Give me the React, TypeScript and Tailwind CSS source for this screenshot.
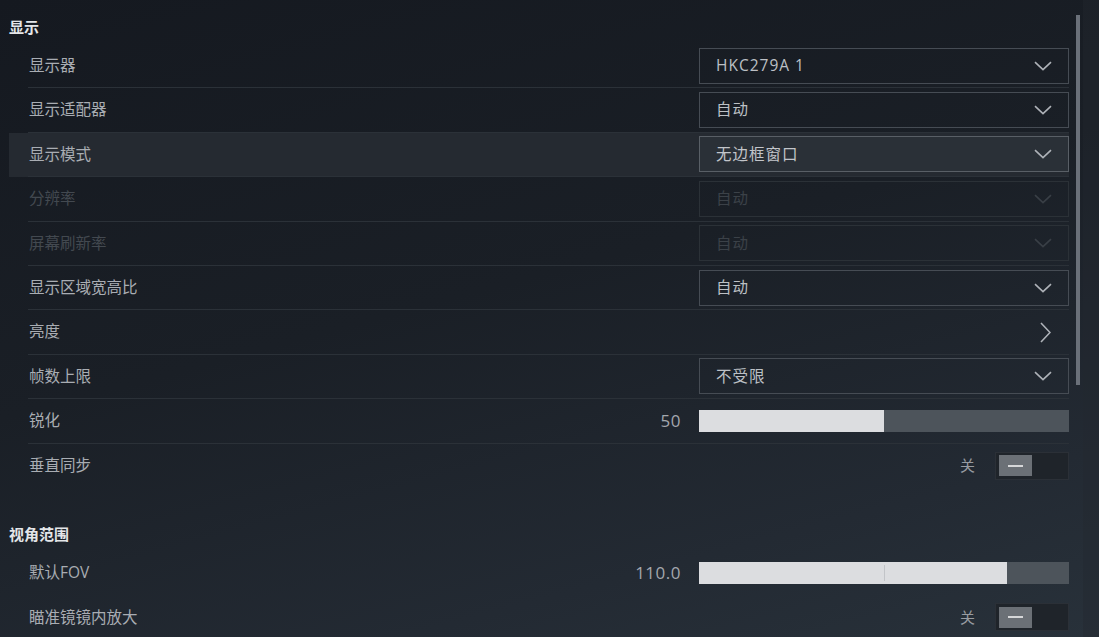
import React from "react";

type Row =
  | { kind: "select"; label: string; value: string; disabled?: boolean; active?: boolean }
  | { kind: "link"; label: string }
  | { kind: "slider"; label: string; value: string; pct: number; tick?: boolean }
  | { kind: "toggle"; label: string };

const DISPLAY_ROWS: Row[] = [
  { kind: "select", label: "显示器", value: "HKC279A 1" },
  { kind: "select", label: "显示适配器", value: "自动" },
  { kind: "select", label: "显示模式", value: "无边框窗口", active: true },
  { kind: "select", label: "分辨率", value: "自动", disabled: true },
  { kind: "select", label: "屏幕刷新率", value: "自动", disabled: true },
  { kind: "select", label: "显示区域宽高比", value: "自动" },
  { kind: "link", label: "亮度" },
  { kind: "select", label: "帧数上限", value: "不受限" },
  { kind: "slider", label: "锐化", value: "50", pct: 50 },
  { kind: "toggle", label: "垂直同步" },
];

const FOV_ROWS: Row[] = [
  { kind: "slider", label: "默认FOV", value: "110.0", pct: 83.2, tick: true },
  { kind: "toggle", label: "瞄准镜镜内放大" },
];

const font = "font-['Open_Sans','Noto_Sans_CJK_SC',sans-serif]";

function ChevronDown({ dim }: { dim?: boolean }) {
  return (
    <svg width="18" height="10" viewBox="0 0 18 10" fill="none">
      <path
        d="M1 1.2 L9 8.6 L17 1.2"
        stroke={dim ? "#393f46" : "#aeb2b8"}
        strokeWidth="1.6"
      />
    </svg>
  );
}

function Control({ row }: { row: Row }) {
  if (row.kind === "select") {
    return (
      <div
        className={`flex h-[36px] w-[370px] items-center justify-between border pl-[16px] pr-[16px] ${
          row.disabled
            ? "border-[#2b3137] text-[#3b4148]"
            : row.active
              ? "border-[#595f66] bg-[#2a3037] text-[#c2c5ca]"
              : "border-[#464c54] text-[#bcc0c5]"
        }`}
      >
        <span className="text-[15.5px] tracking-[1px]">{row.value}</span>
        <ChevronDown dim={row.disabled} />
      </div>
    );
  }
  if (row.kind === "link") {
    return (
      <div className="flex w-[370px] justify-end pr-[18px]">
        <svg width="11" height="21" viewBox="0 0 11 21" fill="none">
          <path d="M1 1 L10 10.5 L1 20" stroke="#aeb2b8" strokeWidth="1.6" />
        </svg>
      </div>
    );
  }
  if (row.kind === "slider") {
    return (
      <div className="flex items-center">
        <span className="mr-[18px] text-[17px] tracking-[0.5px] text-[#a3a7ad]">
          {row.value}
        </span>
        <div className="relative h-[22px] w-[370px] bg-[#4d545b]">
          <div className="h-full bg-[#dcdde0]" style={{ width: `${row.pct}%` }} />
          {row.tick && (
            <div className="absolute left-1/2 top-[3px] h-[16px] w-px bg-[#c2c4c8]" />
          )}
        </div>
      </div>
    );
  }
  return (
    <div className="flex items-center">
      <span className="mr-[20px] text-[15px] text-[#979ba1]">关</span>
      <div className="flex h-[28px] w-[74px] items-center border border-[#2b3037] bg-[#1f242a] pl-[3px]">
        <div className="flex h-[21px] w-[33px] items-center justify-center bg-[#6b7076]">
          <div className="h-[2px] w-[15px] bg-[#d6d7d9]" />
        </div>
      </div>
    </div>
  );
}

function SettingRow({ row, line }: { row: Row; line: boolean }) {
  const disabled = row.kind === "select" && row.disabled;
  const active = row.kind === "select" && row.active;
  return (
    <div className={`${active ? "bg-[#252a31] -ml-[19px] pl-[19px]" : ""}`}>
      <div
        className={`flex h-[44.4px] items-center justify-between ${
          line ? "border-b border-[#2b3138]" : ""
        }`}
      >
        <span
          className={`pl-px text-[15.5px] ${disabled ? "text-[#434950]" : "text-[#a9adb3]"}`}
        >
          {row.label}
        </span>
        <Control row={row} />
      </div>
    </div>
  );
}

export default function App() {
  return (
    <div
      className={`${font} flex h-[637px] w-[1099px] overflow-hidden bg-[linear-gradient(165deg,#151920_0%,#1a1f26_45%,#232a33_80%,#28313a_100%)]`}
    >
      <div className="flex-1 pl-[9px]">
        <div className="flex h-[44px] items-center pt-[10px] text-[15px] font-bold text-[#e4e6e9]">
          显示
        </div>
        <div className="pl-[19px]">
          {DISPLAY_ROWS.map((r, i) => (
            <SettingRow key={r.label} row={r} line={i < DISPLAY_ROWS.length - 1} />
          ))}
        </div>
        <div className="flex h-[63px] items-center pt-[30px] text-[15px] font-bold text-[#e4e6e9]">
          视角范围
        </div>
        <div className="pl-[19px]">
          {FOV_ROWS.map((r) => (
            <SettingRow key={r.label} row={r} line={false} />
          ))}
        </div>
      </div>
      <div className="flex w-[30px] pl-[7px]">
        <div className="mt-[15px] h-[370px] w-[4px] bg-[#6a7079]" />
        <div className="ml-[3px] h-full flex-1 bg-[#222830]/40" />
      </div>
    </div>
  );
}
